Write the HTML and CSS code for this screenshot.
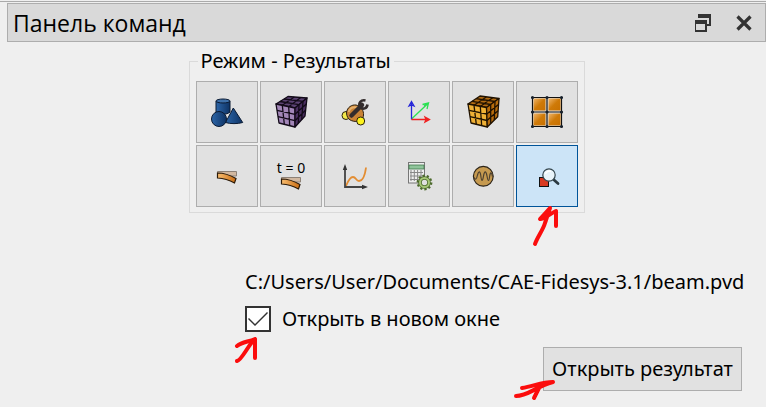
FILE: index.html
```
<!DOCTYPE html>
<html lang="ru">
	<head>
		<meta charset="UTF-8" />
		<meta name="viewport" content="width=device-width, initial-scale=1.0" />
		<title>Панель команд</title>
		<link rel="stylesheet" href="styles.css">
	</head>
	<body>
		<section class="panel">
			<header class="panel-header">
				<h1>Панель команд</h1>
				<button type="button" class="title-btn" aria-label="Открепить">
					<svg width="18" height="18" viewBox="0 0 18 18">
						<path d="M4 1h11v10h-4" fill="none" stroke="#333" stroke-width="2" />
						<path d="M3 0h13v4H3z" fill="#333" />
						<rect x="0" y="7" width="11" height="10" fill="#d9d9d9" stroke="#333" stroke-width="2" />
						<path d="M0 6h12v4H0z" fill="#333" />
					</svg>
				</button>
				<button type="button" class="title-btn" aria-label="Закрыть">
					<svg width="18" height="18" viewBox="0 0 18 18">
						<path d="M2.500 2.500l13 13M15.500 2.500l-13 13" stroke="#333" stroke-width="3.200" />
					</svg>
				</button>
			</header>

			<fieldset class="modes">
				<legend>Режим - Результаты</legend>
				<div class="mode-grid">
					<button type="button" class="mode" aria-label="Геометрия">
						<svg viewBox="0 0 40 40" stroke="#0a1a33">
							<defs>
								<linearGradient id="blue"><stop offset="0" stop-color="#2d66a8" /><stop offset="1" stop-color="#0d3264" /></linearGradient>
							</defs>
							<path d="M9 9v11c3 3 11 3 14 0V9" fill="url(#blue)" />
							<ellipse cx="16" cy="9" rx="7" ry="2" fill="#3d6fa8" />
							<path d="M26.300 16L35.700 30.500C31 32 23 32 18.500 30.500z" fill="url(#blue)" />
							<circle cx="12" cy="27" r="7.500" fill="url(#blue)" />
						</svg>
					</button>
					<button type="button" class="mode" aria-label="Сетка">
						<svg viewBox="0 0 40 40" stroke="#120a18" stroke-width="1.300" stroke-linejoin="round">
							<path d="M5 12L17 4.500L36 6L24 16z" fill="#5b4272" />
							<path d="M5 12L24 16V35L8 31z" fill="#a286b8" />
							<path d="M24 16L36 6L34 24L24 35z" fill="#4a2f60" />
							<path d="M9 9.500L28 12.700M13 7L32 9.300M11.300 13.300L23.300 5M17.700 14.700L29.700 5.500M6 18.300L24 22.300L35.300 12M7 24.700L24 28.700L34.700 18M11.300 13.300L13.300 32.300M17.700 14.700L18.700 33.700M28 12.700L27.300 31.300M32 9.300L30.700 27.700" fill="none" />
						</svg>
					</button>
					<button type="button" class="mode" aria-label="Материалы">
						<svg viewBox="0 0 40 40" stroke="#2a2010">
							<circle cx="11" cy="23.500" r="4" fill="#f2e84a" />
							<path d="M11.500 21C12 15 17 12.500 21 13C26 14 29 19 28.500 23C28 28 26 29.500 22 29.500C17 29.500 12 28 11.500 21z" fill="#c98235" />
							<path d="M13.500 20C15 16 18 14.500 22 15.500" fill="none" stroke="#e5b06c" stroke-width="2" />
							<path d="M16.500 23.500L27 13" stroke="#332c2c" stroke-width="4.500" stroke-linecap="round" />
							<path d="M30.500 8.500C26 7.500 23 11 25 15C28 18 32 16.500 32.500 12.500" fill="none" stroke="#332c2c" stroke-width="2.600" />
							<circle cx="25.700" cy="29" r="4" fill="#fcf21c" />
						</svg>
					</button>
					<button type="button" class="mode" aria-label="Граничные условия">
						<svg viewBox="0 0 40 40" fill="none" stroke-width="1.300">
							<path d="M12.500 27L29.500 11M23.500 12.500L29.500 11L28 17M25 14L29.500 11" stroke="#2be052" />
							<path d="M12.500 27.500V9.500M10 14L12.500 9.500L15 14L12.500 13z" stroke="#2424d8" />
							<path d="M12.500 27.500H30M26 25L30.500 27.500L26 30L27 27.500z" stroke="#f02020" />
						</svg>
					</button>
					<button type="button" class="mode" aria-label="Конечные элементы">
						<svg viewBox="0 0 40 40" stroke="#201200" stroke-width="1.300" stroke-linejoin="round">
							<path d="M5 12L17 4L36 6.500L23.500 15.500z" fill="#b36b12" />
							<path d="M5 12L23.500 15.500L24.300 35L8 31z" fill="#efb035" />
							<path d="M23.500 15.500L36 6.500L34.700 24.700L24.300 35z" fill="#b86c0c" />
							<path d="M9 9.300L27.700 12.500M13 6.700L32 9.500M11 13.300L23.300 5M17.300 14.500L29.700 5.700M6 18.300L23.800 22L35.500 12.500M7 24.700L24 28.500L35 18.700M11 13.300L13.300 32.300M17.300 14.500L18.700 33.700M27.700 12.500L27.700 31.500M32 9.500L31.300 28" fill="none" />
						</svg>
					</button>
					<button type="button" class="mode" aria-label="Блоки">
						<svg viewBox="0 0 40 40" stroke="#111">
							<defs>
								<linearGradient id="amber" x2="1" y2="1"><stop offset="0" stop-color="#f0b56b" /><stop offset=".5" stop-color="#cf7a08" /><stop offset="1" stop-color="#c87000" /></linearGradient>
							</defs>
							<path d="M5.500 5.500h29v29h-29zM20 5.500v29M5.500 20h29" fill="none" stroke-width="1.200" />
							<g fill="url(#amber)" stroke="none">
								<rect x="6.500" y="6.500" width="12" height="12" />
								<rect x="21.500" y="6.500" width="12" height="12" />
								<rect x="6.500" y="21.500" width="12" height="12" />
								<rect x="21.500" y="21.500" width="12" height="12" />
							</g>
							<path d="M5.500 5.500h0M20 5.500h0M34.500 5.500h0M5.500 20h0M20 20h0M34.500 20h0M5.500 34.500h0M20 34.500h0M34.500 34.500h0" stroke="#17202a" stroke-width="3.200" stroke-linecap="round" />
						</svg>
					</button>
					<button type="button" class="mode" aria-label="Балка">
						<svg viewBox="0 0 40 40">
							<defs>
								<linearGradient id="beam"><stop offset="0" stop-color="#f8bd70" /><stop offset="1" stop-color="#c96c12" /></linearGradient>
							</defs>
							<path d="M10.500 15.500h19v4.500h-19z" fill="#d2b8a0" stroke="#8d8176" />
							<path d="M10.500 17C17 17 23 19 29 22.500L27.500 27C22 24 17 22.500 10.500 22z" fill="url(#beam)" stroke="#2b1a08" stroke-width="1.200" />
						</svg>
					</button>
					<button type="button" class="mode" aria-label="Начальные условия">
						<svg viewBox="0 0 40 40">
							<text class="icon-text" x="20" y="17" text-anchor="middle">t = 0</text>
							<path d="M10.500 21.500h19v4.500h-19z" fill="#d2b8a0" stroke="#8d8176" />
							<path d="M10.500 23C17 23 23 25 29 28.500L27.500 33C22 30 17 28.500 10.500 28z" fill="url(#beam)" stroke="#2b1a08" stroke-width="1.200" />
						</svg>
					</button>
					<button type="button" class="mode" aria-label="График">
						<svg viewBox="0 0 40 40" fill="none">
							<path d="M11 30C13 25 15 21 18 21C21 21 21 25 24 25C28 25 30 19 31 11.500" stroke="#e38d32" stroke-width="1.800" />
							<path d="M10 12V31H29" stroke="#444" stroke-width="1.800" />
							<path d="M10 8l2.200 6H7.800zM33 31l-6 2.200V28.800z" fill="#333" />
						</svg>
					</button>
					<button type="button" class="mode" aria-label="Расчёт">
						<svg viewBox="0 0 40 40">
							<rect x="9.500" y="6.500" width="16" height="20.500" fill="#eee" stroke="#777" />
							<path d="M10 9h15v4H10z" fill="#8fc49a" stroke="#3f7a4c" stroke-width=".8" />
							<path d="M12 14v11M15.300 14v11M18.600 14v11M22 14v11M11 16.500h13M11 20h13M11 23.500h13" stroke="#888" stroke-width="1" />
							<circle cx="25.500" cy="26.500" r="6.700" fill="none" stroke="#4c6a2c" stroke-width="2.400" stroke-dasharray="2.200 2" />
							<circle cx="25.500" cy="26.500" r="4.500" fill="#e0e0e0" stroke="#4c6a2c" stroke-width="3.600" />
							<circle cx="25.500" cy="26.500" r="4.500" fill="none" stroke="#a6c777" stroke-width="2" />
						</svg>
					</button>
					<button type="button" class="mode" aria-label="Колебания">
						<svg viewBox="0 0 40 40">
							<circle cx="20.300" cy="20.300" r="9.900" fill="#c69a50" stroke="#2c2418" stroke-width="1.200" />
							<path d="M11 21.500C12 24 13.500 24 14.500 19C15.500 15 17 14.500 17.700 19C18.500 26 19.500 26 20.500 20C21.500 14.500 23 14.500 24 20C25 26 26 26 26.700 20C27.500 15.500 28.500 16 29.500 20.500" fill="none" stroke="#4d4030" stroke-width="1.200" />
						</svg>
					</button>
					<button type="button" class="mode active" aria-label="Результаты">
						<svg viewBox="0 0 40 40">
							<rect x="12.500" y="21.500" width="9" height="9" fill="#d83a22" stroke="#111" />
							<path d="M26.500 23.500L31 27.500" stroke="#2b3940" stroke-width="2.800" stroke-linecap="round" />
							<circle cx="22" cy="19" r="6.200" fill="#e9f4fa" stroke="#34454d" stroke-width="1.200" />
							<path d="M18.500 18C19 15.500 22 14.500 24 15.500" fill="none" stroke="#fff" stroke-width="1.500" />
						</svg>
						<svg class="arrow arrow-mode" viewBox="0 0 32 46">
							<path d="M5 42C8 34 13 28 15 21L20 6L10 17C13 18 18 13 26 9L26 24" />
						</svg>
					</button>
				</div>
			</fieldset>

			<form class="result">
				<output class="path">C:/Users/User/Documents/CAE-Fidesys-3.1/beam.pvd</output>
				<div class="option">
					<input type="checkbox" id="newWindow" checked />
					<label for="newWindow">Открыть в новом окне</label>
					<svg class="arrow arrow-check" viewBox="0 0 32 32">
						<path d="M6 28C11 27 17 12 24 6L24 25M6 13C11 9 17 9 24 6" />
					</svg>
				</div>
				<button type="button" class="open-btn">
					Открыть результат
					<svg class="arrow arrow-open" viewBox="0 0 44 24">
						<path d="M4 18C16 18 23 9 41 4C30 4 22 8 10 10M22 20L27 10" />
					</svg>
				</button>
			</form>
		</section>
	</body>
</html>
```
FILE: styles.css
```
* {
	box-sizing: border-box;
}
body {
	margin: 0;
	background: #efefef;
	color: #000;
	font-family: "Noto Sans", Tahoma, sans-serif;
	font-size: 20px;
	line-height: 24px;
}
button,
input {
	font: inherit;
	color: inherit;
	margin: 0;
}
.panel {
	margin-top: 1px;
	border-top: 1px solid #aaa;
	padding: 1px 0 16px 7px;
}
.panel-header {
	display: flex;
	align-items: center;
	gap: 22px;
	height: 39px;
	padding: 0 12px 0 5px;
	background: #d9d9d9;
	border: 1px solid #adadad;
}
h1 {
	flex: 1;
	margin: 0;
	font-family: "Open Sans", "Segoe UI", sans-serif;
	font-size: 23px;
	font-weight: 400;
	line-height: 32px;
}
.title-btn {
	display: flex;
	padding: 0;
	border: none;
	background: none;
}
.modes {
	width: fit-content;
	margin: 7px auto 0;
	padding: 8px 6px 5px;
	border: 1px solid #dadada;
}
legend {
	margin-left: 2px;
	padding: 0 3px;
}
.mode-grid {
	display: grid;
	grid-template-columns: repeat(6, 62px);
	gap: 2px;
}
.mode {
	position: relative;
	display: flex;
	align-items: center;
	justify-content: center;
	height: 62px;
	padding: 0;
	background: #e1e1e1;
	border: 1px solid #adadad;
}
.mode > svg:first-child {
	width: 40px;
	height: 40px;
}
.mode.active {
	background: #cce4f7;
	border-color: #005499;
}
.icon-text {
	font-size: 14px;
}
.result {
	display: flex;
	flex-direction: column;
	width: 497px;
	margin: 57px 24px 0 auto;
}
.path {
	white-space: nowrap;
}
.option {
	position: relative;
	display: flex;
	align-items: center;
	gap: 11px;
	margin: 12px 0 15px;
}
input[type="checkbox"] {
	appearance: none;
	width: 26px;
	height: 26px;
	border: 2px solid #333;
	background: #fff;
	display: grid;
	place-items: center;
}
input[type="checkbox"]:checked::before {
	content: "";
	width: 20px;
	height: 14px;
	background: #333;
	clip-path: polygon(0 7px, 1px 6px, 7px 12px, 19px 0, 20px 1px, 7px 14px);
}
.open-btn {
	position: relative;
	align-self: flex-end;
	width: 199px;
	height: 44px;
	padding: 0;
	background: #e1e1e1;
	border: 1px solid #adadad;
	white-space: nowrap;
}
/* red marker arrows */
.arrow {
	position: absolute;
	fill: none;
	stroke: #fb0d0d;
	stroke-width: 4;
	stroke-linecap: round;
	stroke-linejoin: round;
	pointer-events: none;
}
.arrow-mode {
	width: 32px;
	height: 46px;
	left: 13px;
	top: 56px;
	z-index: 1;
}
.arrow-check {
	width: 32px;
	height: 32px;
	left: -14px;
	top: 27px;
}
.arrow-open {
	width: 44px;
	height: 24px;
	left: -32px;
	top: 30px;
}
```
